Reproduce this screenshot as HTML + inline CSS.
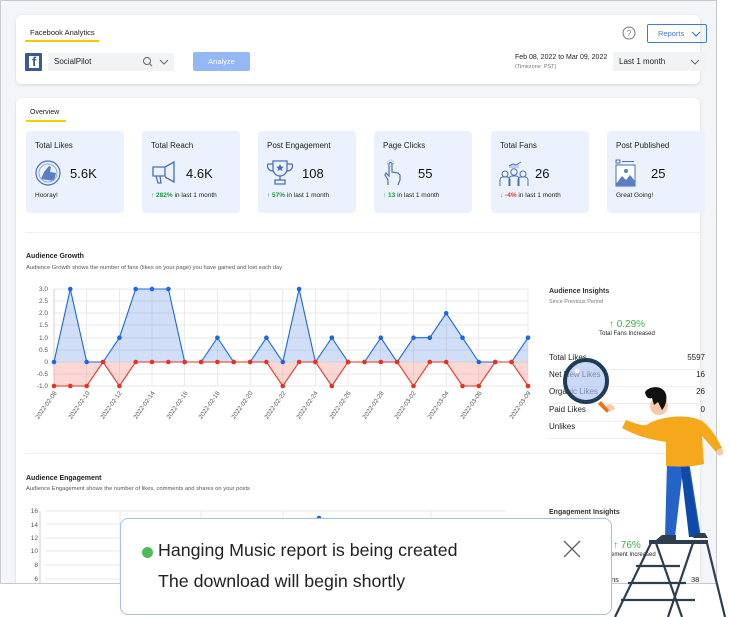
<!DOCTYPE html>
<html><head><meta charset="utf-8"><style>
*{margin:0;padding:0;box-sizing:border-box}
body{width:730px;height:617px;background:#fff;font-family:"Liberation Sans",sans-serif;position:relative;overflow:hidden;color:#222}
.a{position:absolute;white-space:nowrap}
#frame{position:absolute;left:0;top:0;width:717px;height:584px;background:#f4f5f8;border:1px solid #c8c9cc;overflow:hidden}
.card{position:absolute;background:#fff;border-radius:6px;box-shadow:0 1px 3px rgba(0,0,0,.12)}
.stat{position:absolute;top:130px;width:98px;height:82px;background:#ebf2fd;border-radius:4px}
.stat .t{position:absolute;left:9px;top:10px;font-size:8px;color:#222}
.stat .v{position:absolute;left:44px;top:35px;font-size:13px;color:#111}
.stat .f{position:absolute;left:9px;top:61px;font-size:6.5px;color:#222}
.stat svg{position:absolute;left:8px;top:28px}
.g{color:#1f9a3a;font-weight:bold}
.r{color:#e23b2e;font-weight:bold}
.row{position:absolute;left:548px;width:156px;font-size:8px;border-bottom:1px solid #eee;height:17px}
.row span{position:absolute;right:0}
</style></head><body>
<div id="frame">
 <div class="card" style="left:15px;top:14px;width:684px;height:69px"></div>
 <div class="a" style="left:29px;top:27px;font-size:7.5px">Facebook Analytics</div>
 <div class="a" style="left:24px;top:39px;width:74px;height:2px;background:#f5c800"></div>
 <div class="a" style="left:24px;top:52px;width:17px;height:18px;background:#3b5998;border-radius:1px"></div>
 <div class="a" style="left:28px;top:55px;width:10px;height:12px;background:#fff"></div>
 <div class="a" style="left:31px;top:54px;font-size:13px;font-weight:bold;color:#3b5998;line-height:14px">f</div>
 <div class="a" style="left:47px;top:52px;width:126px;height:18px;background:#f2f3f5"></div>
 <div class="a" style="left:53px;top:56px;font-size:8px">SocialPilot</div>
 <svg class="a" style="left:141px;top:55px" width="30" height="12"><circle cx="5" cy="5" r="3.5" fill="none" stroke="#666" stroke-width="1"/><path d="M7.6 7.6L10 10" stroke="#666"/><path d="M18 4l4 4 4-4" fill="none" stroke="#666"/></svg>
 <div class="a" style="left:192px;top:51px;width:57px;height:19px;background:#94b8f5;border-radius:2px;color:#fff;font-size:7.5px;text-align:center;line-height:19px">Analyze</div>
 <svg class="a" style="left:621px;top:25px" width="14" height="14"><circle cx="7" cy="7" r="6" fill="none" stroke="#777" stroke-width="1"/><text x="7" y="10" font-size="8" text-anchor="middle" fill="#777" font-family="Liberation Sans">?</text></svg>
 <div class="a" style="left:646px;top:23px;width:60px;height:19px;border:1px solid #3b7ae0;border-radius:2px;color:#3b7ae0;font-size:7.5px;line-height:17px;padding-left:10px">Reports</div>
 <svg class="a" style="left:690px;top:30px" width="10" height="6"><path d="M1 1l4 4 4-4" fill="none" stroke="#3b7ae0" stroke-width="1.2"/></svg>
 <div class="a" style="left:514px;top:53px;font-size:7px">Feb 08, 2022 to Mar 09, 2022</div>
 <div class="a" style="left:514px;top:63px;font-size:5.5px;color:#777">(Timezone: PST)</div>
 <div class="a" style="left:612px;top:51px;width:94px;height:19px;background:#f2f3f5"></div>
 <div class="a" style="left:618px;top:56px;font-size:8px">Last 1 month</div>
 <svg class="a" style="left:689px;top:58px" width="10" height="6"><path d="M1 1l4 4 4-4" fill="none" stroke="#666"/></svg>

 <div class="card" style="left:15px;top:97px;width:684px;height:500px"></div>
 <div class="a" style="left:29px;top:108px;font-size:7px">Overview</div>
 <div class="a" style="left:25px;top:119px;width:40px;height:1.5px;background:#f5d000"></div>

 <div class="stat" style="left:25px"><div class="t">Total Likes</div>
  <svg width="28" height="28"><circle cx="14" cy="14" r="12" fill="none" stroke="#4a6fb5" stroke-width="1.2"/><path d="M7 20l3-7 5-6 2 1-1 5 6 1-2 8z" fill="#5b7ec4"/><circle cx="14" cy="14" r="9" fill="none" stroke="#8fa8dd" stroke-width="1"/></svg>
  <div class="v">5.6K</div><div class="f">Hooray!</div></div>
 <div class="stat" style="left:141px"><div class="t">Total Reach</div>
  <svg width="30" height="28"><path d="M3 8h12v9H3z M15 8l9-5v20l-9-5" fill="none" stroke="#4a6fb5" stroke-width="1.3"/><path d="M6 17l2 7h3l-1-7" fill="none" stroke="#4a6fb5" stroke-width="1.3"/></svg>
  <div class="v">4.6K</div><div class="f"><span class="g">↑ 282%</span> in last 1 month</div></div>
 <div class="stat" style="left:257px"><div class="t">Post Engagement</div>
  <svg width="28" height="28"><path d="M7 2h14v8a7 7 0 0 1-14 0z M7 5H2a5 5 0 0 0 5 7 M21 5h5a5 5 0 0 1-5 7 M14 17v4 M9 21h10v4H9z" fill="none" stroke="#4a6fb5" stroke-width="1.3"/><path d="M14 5l1.2 2.5 2.6.3-2 1.8.6 2.6-2.4-1.4-2.4 1.4.6-2.6-2-1.8 2.6-.3z" fill="#4a6fb5"/></svg>
  <div class="v">108</div><div class="f"><span class="g">↑ 57%</span> in last 1 month</div></div>
 <div class="stat" style="left:373px"><div class="t">Page Clicks</div>
  <svg width="28" height="28"><path d="M6 26v-5l-3-5 1-2 3 3V5a1.5 1.5 0 0 1 3 0v8l6 1 2 2v5l-2 5" fill="none" stroke="#4a6fb5" stroke-width="1.2"/><circle cx="8.5" cy="4" r="3" fill="none" stroke="#8fa8dd" stroke-dasharray="1 1"/></svg>
  <div class="v">55</div><div class="f"><span class="g">↑ 13</span> in last 1 month</div></div>
 <div class="stat" style="left:490px"><div class="t">Total Fans</div>
  <svg width="30" height="28"><circle cx="6" cy="15" r="3" fill="none" stroke="#4a6fb5"/><circle cx="15" cy="13" r="3.2" fill="none" stroke="#4a6fb5"/><circle cx="24" cy="15" r="3" fill="none" stroke="#4a6fb5"/><path d="M1 27v-6a3 3 0 0 1 3-3h4a3 3 0 0 1 3 3v6 M10 27v-7a3 3 0 0 1 3-3h4a3 3 0 0 1 3 3v7 M19 27v-6a3 3 0 0 1 3-3h4a3 3 0 0 1 3 3v6" fill="none" stroke="#4a6fb5"/><path d="M10 7l4-2 3 1 5-3" fill="none" stroke="#4a6fb5"/><path d="M11 9v-2M13 9v-3M15 9v-3M17 9v-3M19 9v-4" stroke="#8fa8dd"/></svg>
  <div class="v">26</div><div class="f"><span class="r">↓ -4%</span> in last 1 month</div></div>
 <div class="stat" style="left:606px"><div class="t">Post Published</div>
  <svg width="28" height="28"><rect x="1" y="1" width="4" height="3" fill="none" stroke="#4a6fb5"/><path d="M7 2.5h12" stroke="#4a6fb5"/><rect x="1" y="6" width="19" height="21" fill="#fff" stroke="#4a6fb5"/><path d="M1 25l6-8 4 4 4-5 5 6v5H1z" fill="#5b7ec4"/><circle cx="11" cy="12" r="2" fill="#5b7ec4"/></svg>
  <div class="v">25</div><div class="f">Great Going!</div></div>

 <div class="a" style="left:24px;top:231px;width:680px;height:1px;background:#eef0f3"></div>
 <div class="a" style="left:25px;top:252px;font-size:7px;font-weight:bold">Audience Growth</div>
 <div class="a" style="left:25px;top:264px;font-size:5.8px;color:#555">Audience Growth shows the number of fans (likes on your page) you have gained and lost each day</div>

 <svg class="a" style="left:0;top:280px" width="540" height="170" viewBox="0 280 540 170">
  <defs><marker id="mb" markerWidth="6" markerHeight="6" refX="3" refY="3" markerUnits="userSpaceOnUse"><circle cx="3" cy="3" r="2.3" fill="#1a66e6"/></marker>
  <marker id="mr" markerWidth="6" markerHeight="6" refX="3" refY="3" markerUnits="userSpaceOnUse"><circle cx="3" cy="3" r="2.3" fill="#e8321f"/></marker></defs>
  <g stroke="#e2e2e2" stroke-width="0.7">
   <path d="M53 288H527M53 300H527M53 312H527M53 324H527M53 337H527M53 349H527M53 373H527M53 385H527"/>
   <path d="M85.7 288V385M118.4 288V385M151 288V385M183.7 288V385M216.4 288V385M249.1 288V385M281.8 288V385M314.4 288V385M347.1 288V385M379.8 288V385M412.5 288V385M445.2 288V385M477.8 288V385M527 288V385"/>
  </g>
  <path d="M53 288V385" stroke="#bbb" stroke-width="0.7"/>
  <polygon fill="rgba(120,160,235,.35)" points="53,361 69.3,288 85.7,361 102,361 118.4,336.7 134.7,288 151,288 167.4,288 183.7,361 200.1,361 216.4,336.7 232.7,361 249.1,361 265.4,336.7 281.8,361 298.1,288 314.4,361 330.8,336.7 347.1,361 363.5,361 379.8,336.7 396.1,361 412.5,336.7 428.8,336.7 445.2,312.3 461.5,336.7 477.8,361 494.2,361 510.5,361 527,336.7 527,361"/>
  <polygon fill="rgba(250,140,130,.35)" points="53,361 53,385 69.3,385 85.7,385 102,361 118.4,385 134.7,361 265.4,361 281.8,385 298.1,361 314.4,361 330.8,385 347.1,361 396.1,361 412.5,385 428.8,361 445.2,361 461.5,385 477.8,385 494.2,361 510.5,361 527,385 527,361"/>
  <path d="M53 361H527" stroke="#ccc" stroke-width="0.7"/>
  <polyline fill="none" stroke="#1a66e6" stroke-width="1.1" marker-start="url(#mb)" marker-mid="url(#mb)" marker-end="url(#mb)" points="53,361 69.3,288 85.7,361 102,361 118.4,336.7 134.7,288 151,288 167.4,288 183.7,361 200.1,361 216.4,336.7 232.7,361 249.1,361 265.4,336.7 281.8,361 298.1,288 314.4,361 330.8,336.7 347.1,361 363.5,361 379.8,336.7 396.1,361 412.5,336.7 428.8,336.7 445.2,312.3 461.5,336.7 477.8,361 494.2,361 510.5,361 527,336.7"/>
  <polyline fill="none" stroke="#e8321f" stroke-width="1.1" marker-start="url(#mr)" marker-mid="url(#mr)" marker-end="url(#mr)" points="53,385 69.3,385 85.7,385 102,361 118.4,385 134.7,361 151,361 167.4,361 183.7,361 200.1,361 216.4,361 232.7,361 249.1,361 265.4,361 281.8,385 298.1,361 314.4,361 330.8,385 347.1,361 363.5,361 379.8,361 396.1,361 412.5,385 428.8,361 445.2,361 461.5,385 477.8,385 494.2,361 510.5,361 527,385"/>
  <g font-size="6.5" fill="#555" text-anchor="end" font-family="Liberation Sans">
   <text x="47" y="290">3.0</text><text x="47" y="302">2.5</text><text x="47" y="314">2.0</text><text x="47" y="326">1.5</text><text x="47" y="339">1.0</text><text x="47" y="351">0.5</text><text x="47" y="363">0</text><text x="47" y="375">-0.5</text><text x="47" y="387">-1.0</text>
  </g>
  <g font-size="6.3" fill="#555" text-anchor="end" font-family="Liberation Sans">
   <text transform="translate(56,392) rotate(-55)">2022-02-08</text>
   <text transform="translate(89,392) rotate(-55)">2022-02-10</text>
   <text transform="translate(121,392) rotate(-55)">2022-02-12</text>
   <text transform="translate(154,392) rotate(-55)">2022-02-14</text>
   <text transform="translate(187,392) rotate(-55)">2022-02-16</text>
   <text transform="translate(219,392) rotate(-55)">2022-02-18</text>
   <text transform="translate(252,392) rotate(-55)">2022-02-20</text>
   <text transform="translate(285,392) rotate(-55)">2022-02-22</text>
   <text transform="translate(317,392) rotate(-55)">2022-02-24</text>
   <text transform="translate(350,392) rotate(-55)">2022-02-26</text>
   <text transform="translate(383,392) rotate(-55)">2022-02-28</text>
   <text transform="translate(415,392) rotate(-55)">2022-03-02</text>
   <text transform="translate(448,392) rotate(-55)">2022-03-04</text>
   <text transform="translate(481,392) rotate(-55)">2022-03-06</text>
   <text transform="translate(530,392) rotate(-55)">2022-03-09</text>
  </g>
 </svg>

 <div class="a" style="left:548px;top:287px;font-size:7px;font-weight:bold;color:#333">Audience Insights</div>
 <div class="a" style="left:548px;top:298px;font-size:5.5px;color:#777">Since Previous Period</div>
 <div class="a" style="left:548px;top:318px;width:156px;text-align:center;font-size:10px;color:#3fae4a">↑ 0.29%</div>
 <div class="a" style="left:548px;top:330px;width:156px;text-align:center;font-size:6px">Total Fans Increased</div>
 <div class="row" style="top:352px">Total Likes<span>5597</span></div>
 <div class="row" style="top:369px">Net New Likes<span>16</span></div>
 <div class="row" style="top:386px">Organic Likes<span>26</span></div>
 <div class="row" style="top:404px">Paid Likes<span>0</span></div>
 <div class="row" style="top:421px">Unlikes<span>0</span></div>

 <div class="a" style="left:24px;top:452px;width:680px;height:1px;background:#eef0f3"></div>
 <div class="a" style="left:25px;top:474px;font-size:7px;font-weight:bold">Audience Engagement</div>
 <div class="a" style="left:25px;top:485px;font-size:5.8px;color:#555">Audience Engagement shows the number of likes, comments and shares on your posts</div>
 <svg class="a" style="left:0;top:500px" width="540" height="84" viewBox="0 500 540 84">
  <g stroke="#e2e2e2" stroke-width="0.7"><path d="M44 510H505M44 523H505M44 537H505M44 550H505M44 564H505M44 578H505M119 510V584M200 510V584M282 510V584M430 510V584"/></g>
  <path d="M39 510V584" stroke="#bbb" stroke-width="0.7"/>
  <g font-size="6.5" fill="#555" text-anchor="end" font-family="Liberation Sans"><text x="37" y="512">16</text><text x="37" y="526">14</text><text x="37" y="539">12</text><text x="37" y="552">10</text><text x="37" y="566">8</text><text x="37" y="580">6</text></g>
  <circle cx="318" cy="517" r="2.3" fill="#1a66e6"/>
 </svg>
 <div class="a" style="left:548px;top:508px;font-size:7px;font-weight:bold;color:#333">Engagement Insights</div>
 <div class="a" style="left:612px;top:539px;font-size:10px;color:#3fae4a">↑ 76%</div>
 <div class="a" style="left:600px;top:551px;font-size:6px">gagement Increased</div>
 <div class="a" style="left:610px;top:574px;font-size:7.5px">ns</div>
 <div class="a" style="left:690px;top:574px;font-size:7.5px">38</div>
</div>

<svg class="a" style="left:0;top:0" width="730" height="617">
 <g stroke="#2e3e4e" stroke-width="2.2" fill="none">
  <path d="M651 543L615 617M693 543L668 617M656 543L682 617M707 543L725 617"/>
  <path d="M636 566H680M628 583H686M621 600H695"/>
 </g>
 <path d="M649 540h59v4h-59z" fill="#2e3e4e"/>
 <path d="M667 463l-2 74h10l7-60 8 60h11l-12-76z" fill="#2563c9"/>
 <path d="M680 461l9 76h11l-12-76z" fill="#0f4aa8"/>
 <path d="M662 535h14v5h-20z M697 533l8 0 3 5h-15z" fill="#2e3e4e"/>
 <path d="M648 424c14-8 38-10 52-4 10 5 18 20 22 28l-6 4-14-16 2 28c-12 3-26 3-38 2l0-24c-14-2-30-6-44-14l4-8c10 4 20 7 22 4z" fill="#f5a81c"/>
 <circle cx="720" cy="452" r="3.5" fill="#f7c9a8"/>
 <path d="M606 405c4-2 8 0 9 4l-6 3z" fill="#f7c9a8"/>
 <circle cx="659" cy="406" r="9" fill="#f7c9a8"/>
 <path d="M645 392c4-6 16-7 20 0 3 5 1 14-3 18l-4-8-4 3-2-7c-3 1-6 0-7-6z" fill="#111"/>
 <path d="M601 401l8 9-2 3-9-9z" fill="#e8721a"/>
 <circle cx="586" cy="381" r="21" fill="rgba(170,195,240,.65)" stroke="#1f3b57" stroke-width="4"/>
 <circle cx="577" cy="371" r="2.5" fill="#fff" opacity=".8"/>
</svg>

<div class="a" style="left:120px;top:518px;width:492px;height:97px;background:#fff;border:1px solid #9ec0f5;border-radius:8px"></div>
<div class="a" style="left:142px;top:547px;width:11px;height:11px;border-radius:50%;background:#4cbb57"></div>
<div class="a" style="left:158px;top:540px;font-size:17.8px;color:#222">Hanging Music report is being created</div>
<div class="a" style="left:158px;top:571px;font-size:17.8px;color:#222">The download will begin shortly</div>
<svg class="a" style="left:563px;top:540px" width="18" height="18"><path d="M1 1L17 17M17 1L1 17" stroke="#666" stroke-width="1.4"/></svg>
</body></html>
